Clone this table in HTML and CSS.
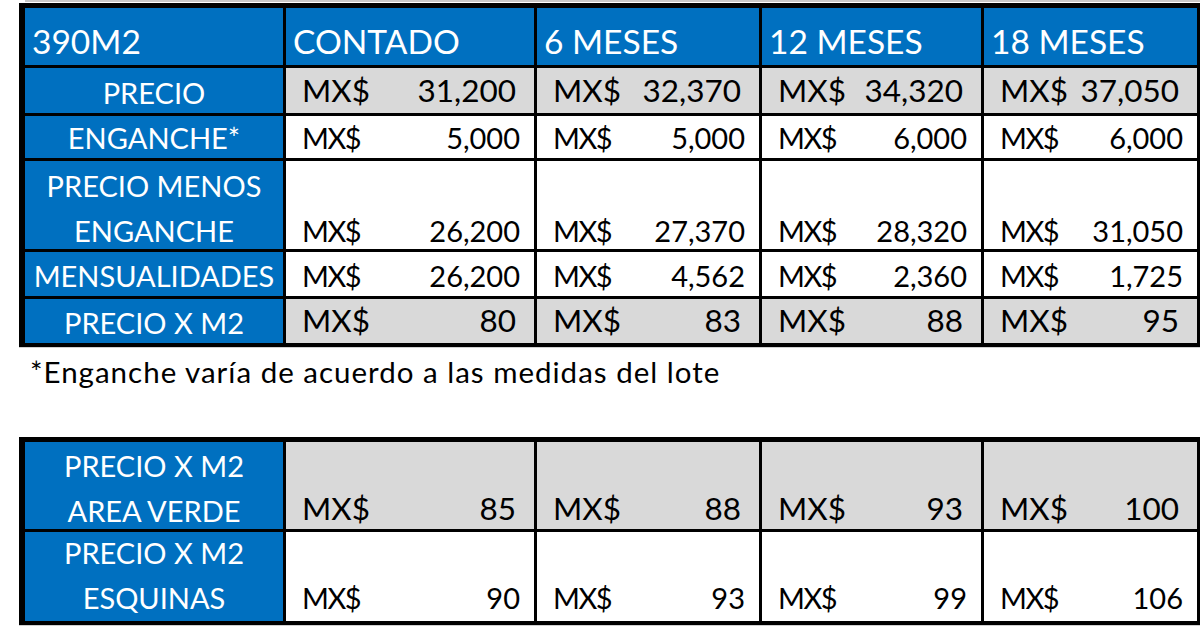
FILE: index.html
```html
<!DOCTYPE html>
<html lang="es">
<head>
<meta charset="utf-8">
<title>390M2</title>
<link rel="stylesheet" href="styles.css">
</head>
<body>
<div class="sheet">
  <div class="topline"></div>
  <div class="grid t1">
    <div class="c hd r-hd">390M2</div>
    <div class="c hd r-hd">CONTADO</div>
    <div class="c hd r-hd">6 MESES</div>
    <div class="c hd r-hd">12 MESES</div>
    <div class="c hd r-hd">18 MESES</div>

    <div class="c lbl r-pr"><span>PRECIO</span></div>
    <div class="c num big gray r-pr"><span>MX$</span><span>31,200</span></div>
    <div class="c num big gray r-pr"><span>MX$</span><span>32,370</span></div>
    <div class="c num big gray r-pr"><span>MX$</span><span>34,320</span></div>
    <div class="c num big gray r-pr"><span>MX$</span><span>37,050</span></div>

    <div class="c lbl r-en"><span>ENGANCHE*</span></div>
    <div class="c num r-en"><span class="cur">MX$</span><span>5,000</span></div>
    <div class="c num r-en"><span class="cur">MX$</span><span>5,000</span></div>
    <div class="c num r-en"><span class="cur">MX$</span><span>6,000</span></div>
    <div class="c num r-en"><span class="cur">MX$</span><span>6,000</span></div>

    <div class="c lbl two r-pme"><span>PRECIO MENOS</span><span>ENGANCHE</span></div>
    <div class="c num r-pme"><span class="cur">MX$</span><span>26,200</span></div>
    <div class="c num r-pme"><span class="cur">MX$</span><span>27,370</span></div>
    <div class="c num r-pme"><span class="cur">MX$</span><span>28,320</span></div>
    <div class="c num r-pme"><span class="cur">MX$</span><span>31,050</span></div>

    <div class="c lbl r-me"><span>MENSUALIDADES</span></div>
    <div class="c num r-me"><span class="cur">MX$</span><span>26,200</span></div>
    <div class="c num r-me"><span class="cur">MX$</span><span>4,562</span></div>
    <div class="c num r-me"><span class="cur">MX$</span><span>2,360</span></div>
    <div class="c num r-me"><span class="cur">MX$</span><span>1,725</span></div>

    <div class="c lbl r-px"><span>PRECIO X M2</span></div>
    <div class="c num big gray r-px"><span>MX$</span><span>80</span></div>
    <div class="c num big gray r-px"><span>MX$</span><span>83</span></div>
    <div class="c num big gray r-px"><span>MX$</span><span>88</span></div>
    <div class="c num big gray r-px"><span>MX$</span><span>95</span></div>
  </div>

  <p class="note">*Enganche varía de acuerdo a las medidas del lote</p>

  <div class="grid t2">
    <div class="c lbl two r-av"><span>PRECIO X M2</span><span>AREA VERDE</span></div>
    <div class="c num big gray r-av"><span>MX$</span><span>85</span></div>
    <div class="c num big gray r-av"><span>MX$</span><span>88</span></div>
    <div class="c num big gray r-av"><span>MX$</span><span>93</span></div>
    <div class="c num big gray r-av"><span>MX$</span><span>100</span></div>

    <div class="c lbl two r-es"><span>PRECIO X M2</span><span>ESQUINAS</span></div>
    <div class="c num r-es"><span class="cur">MX$</span><span>90</span></div>
    <div class="c num r-es"><span class="cur">MX$</span><span>93</span></div>
    <div class="c num r-es"><span class="cur">MX$</span><span>99</span></div>
    <div class="c num r-es"><span class="cur">MX$</span><span>106</span></div>
  </div>
</div>
</body>
</html>
```
FILE: styles.css
```css
html, body {
  margin: 0;
  padding: 0;
  background: #ffffff;
  overflow: hidden;
}

body {
  font-family: Lato, "Open Sans", sans-serif;
  color: #000000;
}

.sheet {
  width: 1200px;
  height: 631px;
}

.topline {
  margin-left: 25px;
  height: 2px;
  background: #c8c8c8;
  margin-bottom: 1px;
}

.grid {
  display: grid;
  grid-template-columns: 258px 248px 222px 219px 213px;
  column-gap: 3px;
  row-gap: 3px;
  padding: 5px 3px 4px 6px;
  margin-left: 19px;
  width: 1181px;
  box-sizing: border-box;
  background: #000000;
  box-shadow: 0 1px 0 #d0d0d0;
}

.t1 {
  grid-template-rows: 57px 45px 42px 88px 44px 44px;
}

.t2 {
  grid-template-rows: 87px 89px;
}

.c {
  display: flex;
  align-items: flex-end;
  background: #ffffff;
  line-height: 1;
  box-sizing: border-box;
  white-space: nowrap;
  overflow: hidden;
}

.hd {
  background: #0070c0;
  color: #ffffff;
  font-size: 33.5px;
  padding-left: 7px;
}

.lbl {
  background: #0070c0;
  color: #ffffff;
  font-size: 29px;
  justify-content: center;
}

.lbl.two {
  flex-direction: column;
  align-items: center;
  justify-content: flex-end;
}

.lbl.two span + span {
  margin-top: 16px;
}

.num {
  justify-content: space-between;
  font-size: 29px;
  padding-left: 16px;
  padding-right: 14px;
}

.num .cur {
  letter-spacing: -1.5px;
}

.num.big {
  font-size: 31.5px;
  padding-right: 18px;
}

.gray {
  background: #d9d9d9;
}

.r-hd { padding-bottom: 7px; }
.r-pr { padding-bottom: 6.4px; }
.r-en { padding-bottom: 6.2px; }
.r-pme { padding-bottom: 4px; }
.r-me { padding-bottom: 5.7px; }
.r-px { padding-bottom: 6.4px; }
.r-av { padding-bottom: 3.6px; }
.r-es { padding-bottom: 8.7px; }

.note {
  margin: 10px 0 50px 30px;
  font-size: 29.5px;
  letter-spacing: 1px;
  line-height: 1;
  color: #000000;
}
```
